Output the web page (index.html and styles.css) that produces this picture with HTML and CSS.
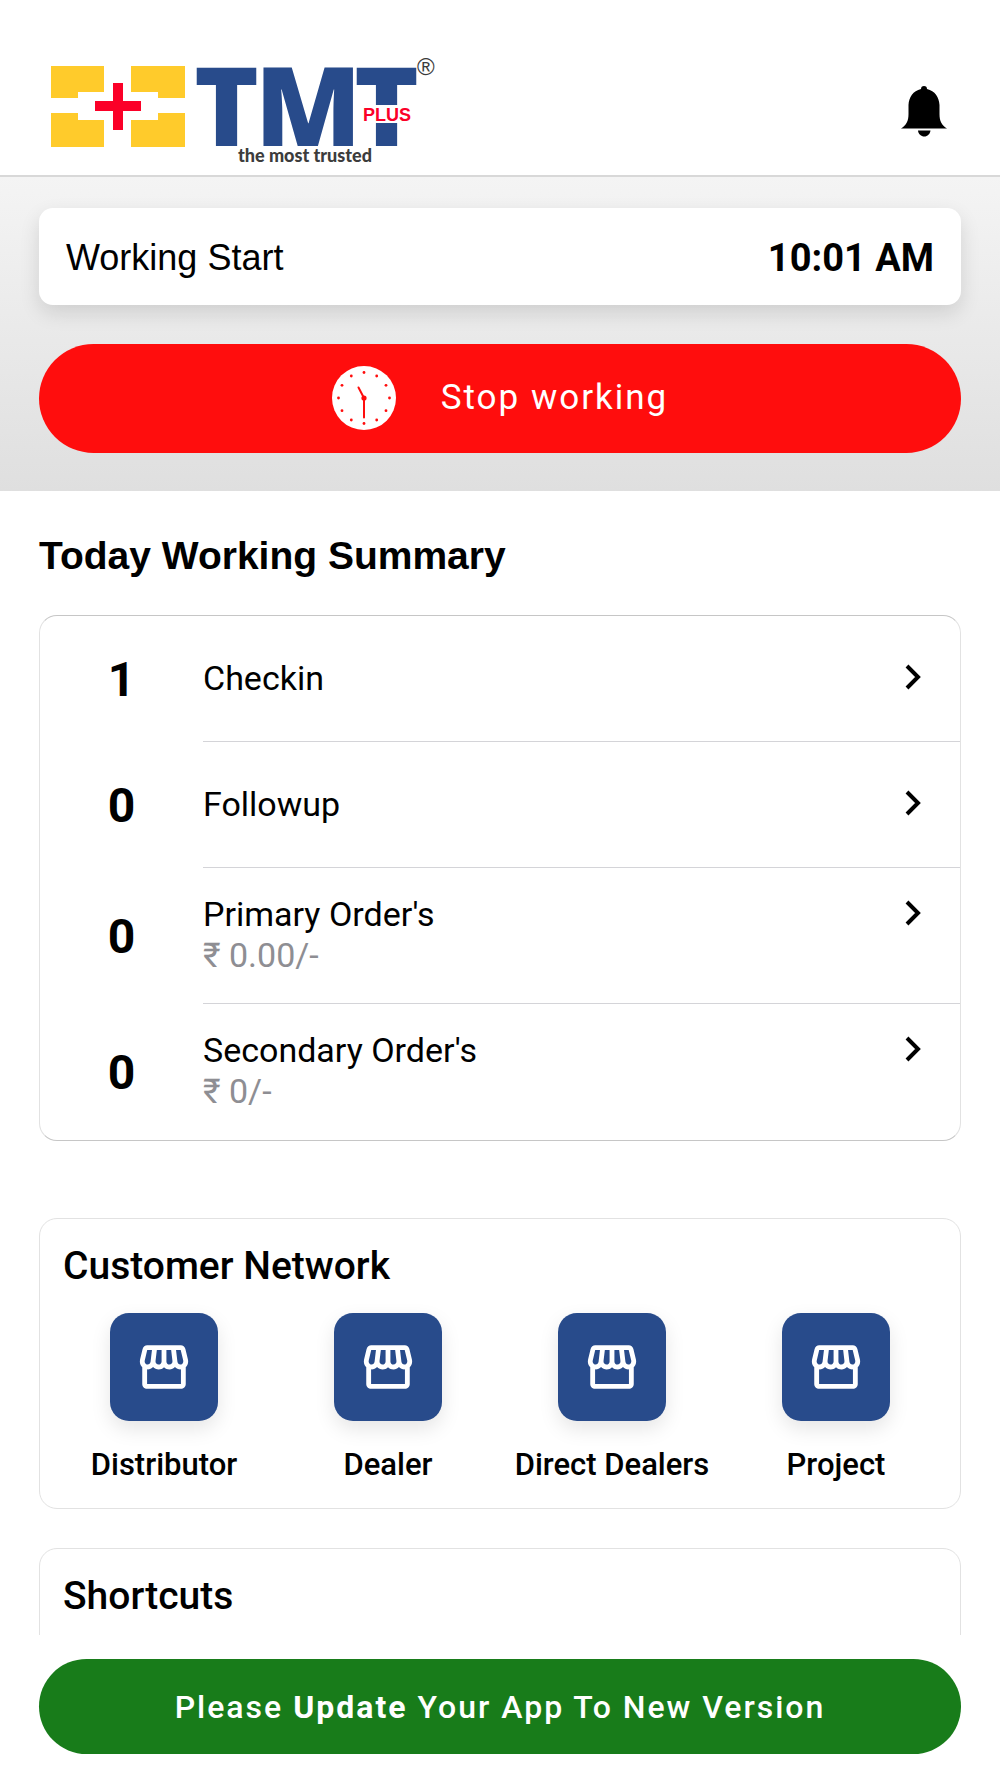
FILE: index.html
```html
<!DOCTYPE html>
<html lang="en">
<head>
    <meta charset="UTF-8">
    <meta name="viewport" content="width=device-width, initial-scale=1">
    <title>TMT Plus</title>
    <link rel="stylesheet" href="styles.css">
</head>
<body>
    <svg class="sprite" width="0" height="0" aria-hidden="true">
        <symbol id="store" viewBox="0 0 24 24">
            <path d="M21.9 8.89l-1.05-4.37c-.22-.9-1-1.52-1.91-1.52H5.05c-.9 0-1.69.63-1.9 1.52L2.1 8.89c-.24 1.02-.02 2.06.62 2.88.08.11.19.19.28.29V19c0 1.1.9 2 2 2h14c1.1 0 2-.9 2-2v-6.94c.09-.09.2-.18.28-.28.64-.82.87-1.87.62-2.89zm-2.99-3.9l1.05 4.37c.1.42.01.84-.25 1.17-.14.18-.44.47-.94.47-.61 0-1.14-.49-1.21-1.14L16.98 5l1.93-.01zM13 5h1.96l.54 4.52c.05.39-.07.78-.33 1.07-.22.26-.54.41-.95.41-.67 0-1.22-.59-1.22-1.31V5zM8.49 9.52L9.04 5H11v4.69c0 .72-.55 1.31-1.29 1.31-.34 0-.65-.15-.89-.41-.25-.29-.37-.68-.33-1.07zm-4.45-.16L5.05 5h1.97l-.58 4.86c-.08.65-.6 1.14-1.21 1.14-.49 0-.8-.29-.93-.47-.27-.32-.36-.75-.26-1.17zM5 19v-6.03c.08.01.15.03.23.03.87 0 1.66-.36 2.24-.95.6.6 1.4.95 2.31.95.87 0 1.65-.36 2.23-.93.59.57 1.39.93 2.29.93.84 0 1.64-.35 2.24-.95.58.59 1.37.95 2.24.95.08 0 .15-.02.23-.03V19H5z"/>
        </symbol>
        <symbol id="chevron" viewBox="0 0 16 26">
            <path d="M2 2l11 11L2 24" fill="none" stroke="currentColor" stroke-width="4"/>
        </symbol>
    </svg>

    <div class="app">
        <header class="header">
            <svg class="logo" viewBox="0 0 386 110" role="img" aria-label="TMT Plus, the most trusted">
                <g fill="#ffcb2b">
                    <path d="M1 10h53v26H28v6H1z"/>
                    <path d="M81 10h54v32h-27v-6H81z"/>
                    <path d="M1 57h27v7h26v27H1z"/>
                    <path d="M108 57h27v34H81V64h27z"/>
                </g>
                <path d="M63 27h10v18h18v10H73v19H63V55H45V45h18z" fill="#fb0028"/>
                <text class="logo-tmt" x="144 205 304" y="90">TMT</text>
                <path d="M306 49h60v18h-60z" fill="#fff"/>
                <text class="logo-plus" x="313" y="65">PLUS</text>
                <text class="logo-tag" x="188" y="106">the most trusted</text>
                <text class="logo-reg" x="367" y="19">®</text>
            </svg>
            <button type="button" class="bell" aria-label="Notifications">
                <svg viewBox="0 0 52 52">
                    <path d="M26 1c2 0 3 1 3 3 8 2 12 8 12.500 16v9c0 7 2 11 7.500 14.500H3C8.500 40 10.500 36 10.500 29v-9C11 12 15 6 23 4c0-2 1-3 3-3z"/>
                    <path d="M20 45.500h12.500c-.5 3.500-3 6-6.200 6s-6-2.500-6.300-6z"/>
                </svg>
            </button>
        </header>

        <main class="content">
            <section class="status">
                <div class="start-card">
                    <span class="start-label">Working Start</span>
                    <span class="start-time">10:01 AM</span>
                </div>
                <button type="button" class="stop-btn">
                    <svg class="clock" viewBox="0 0 64 64">
                        <circle cx="32" cy="32" r="32" fill="#fff"/>
                        <g fill="#ff0d0d">
                            <circle cx="32" cy="6.500" r="1.400"/>
                            <circle cx="44.700" cy="10" r="1.400"/>
                            <circle cx="54" cy="19.300" r="1.400"/>
                            <circle cx="57.500" cy="32" r="1.400"/>
                            <circle cx="54" cy="44.700" r="1.400"/>
                            <circle cx="44.700" cy="54" r="1.400"/>
                            <circle cx="32" cy="57.500" r="1.400"/>
                            <circle cx="19.300" cy="54" r="1.400"/>
                            <circle cx="10" cy="44.700" r="1.400"/>
                            <circle cx="6.500" cy="32" r="1.400"/>
                            <circle cx="10" cy="19.300" r="1.400"/>
                            <circle cx="19.300" cy="10" r="1.400"/>
                            <circle cx="32" cy="32" r="2.600"/>
                        </g>
                        <path d="M26.500 21.500L32 32v19.500" fill="none" stroke="#ff0d0d" stroke-width="2" stroke-linecap="round"/>
                    </svg>
                    <span>Stop working</span>
                </button>
            </section>

            <h1 class="page-title">Today Working Summary</h1>

            <div class="summary">
                <a href="#checkin" class="summary-row">
                    <span class="count">1</span>
                    <span class="row-body">
                        <span class="row-text">Checkin</span>
                        <svg class="chevron"><use href="#chevron"/></svg>
                    </span>
                </a>
                <a href="#followup" class="summary-row">
                    <span class="count">0</span>
                    <span class="row-body">
                        <span class="row-text">Followup</span>
                        <svg class="chevron"><use href="#chevron"/></svg>
                    </span>
                </a>
                <a href="#primary" class="summary-row">
                    <span class="count">0</span>
                    <span class="row-body two-line">
                        <span class="row-text">Primary Order's<small>₹ 0.00/-</small></span>
                        <svg class="chevron"><use href="#chevron"/></svg>
                    </span>
                </a>
                <a href="#secondary" class="summary-row">
                    <span class="count">0</span>
                    <span class="row-body two-line">
                        <span class="row-text">Secondary Order's<small>₹ 0/-</small></span>
                        <svg class="chevron"><use href="#chevron"/></svg>
                    </span>
                </a>
            </div>

            <section class="panel">
                <h2 class="panel-title">Customer Network</h2>
                <div class="tiles">
                    <a href="#distributor" class="tile">
                        <span class="tile-icon"><svg><use href="#store"/></svg></span>
                        <span>Distributor</span>
                    </a>
                    <a href="#dealer" class="tile">
                        <span class="tile-icon"><svg><use href="#store"/></svg></span>
                        <span>Dealer</span>
                    </a>
                    <a href="#direct-dealers" class="tile">
                        <span class="tile-icon"><svg><use href="#store"/></svg></span>
                        <span>Direct Dealers</span>
                    </a>
                    <a href="#project" class="tile">
                        <span class="tile-icon"><svg><use href="#store"/></svg></span>
                        <span>Project</span>
                    </a>
                </div>
            </section>

            <section class="panel shortcuts">
                <h2 class="panel-title">Shortcuts</h2>
            </section>
        </main>

        <footer class="footer">
            <button type="button" class="update-btn">Please <b>Update</b> Your App To New Version</button>
        </footer>
    </div>
</body>
</html>
```

FILE: styles.css
```css
* {
    box-sizing: border-box;
}

body {
    margin: 0;
    font-family: Roboto, sans-serif;
    color: #000;
    background-color: #fff;
}

button {
    border: none;
    padding: 0;
    font-family: inherit;
    cursor: pointer;
}

a {
    color: inherit;
    text-decoration: none;
}

.sprite {
    display: none;
}

.app {
    display: flex;
    flex-direction: column;
    height: 100vh;
}

/* Header */
.header {
    display: flex;
    align-items: center;
    justify-content: space-between;
    padding: 56px 50px 9px;
    border-bottom: 2px solid #d8d8d8;
}

.logo {
    width: 386px;
    height: 110px;
    overflow: visible;
}

.logo-tmt {
    font: 800 110px "Open Sans", sans-serif;
    fill: #284b8b;
}

.logo-plus {
    font: bold 18px "Liberation Sans", sans-serif;
    fill: #fb0028;
}

.logo-tag {
    font: 900 18px Lato, sans-serif;
    fill: #3c3c3c;
}

.logo-reg {
    font: 24px "Liberation Sans", sans-serif;
    fill: #3c3c3c;
}

.bell {
    background: none;
}

.bell svg {
    display: block;
    width: 52px;
    height: 52px;
}

/* Scrolling content */
.content {
    flex: 1;
    min-height: 0;
    overflow-y: auto;
    scrollbar-width: none;
}

.status {
    padding: 31px 39px 38px;
    background: linear-gradient(#f4f4f4, #dfdfdf);
}

.start-card {
    display: flex;
    align-items: center;
    justify-content: space-between;
    height: 97px;
    margin-bottom: 39px;
    padding: 2px 27px 0;
    border-radius: 14px;
    background-color: #fff;
    box-shadow: 0 8px 20px rgba(0, 0, 0, 0.12);
}

.start-label {
    font-family: "Liberation Sans", sans-serif;
    font-size: 36px;
}

.start-time {
    font-size: 38px;
    font-weight: bold;
}

.stop-btn {
    display: flex;
    align-items: center;
    justify-content: center;
    gap: 45px;
    width: 100%;
    height: 109px;
    padding-bottom: 2px;
    border-radius: 55px;
    font-size: 35px;
    letter-spacing: 2px;
    color: #fff;
    background-color: #ff0d0d;
}

.clock {
    width: 64px;
    height: 64px;
}

.page-title {
    margin: 40px 39px 35px;
    font-family: "Liberation Sans", sans-serif;
    font-size: 39px;
    line-height: 49px;
}

.summary {
    margin: 0 39px 77px;
    border: 1px solid #e2e2e2;
    border-top-color: #c6c6c6;
    border-bottom-color: #c6c6c6;
    border-radius: 18px;
}

.summary-row {
    display: flex;
    align-items: center;
}

.count {
    width: 163px;
    text-align: center;
    font-size: 48px;
    font-weight: bold;
}

.row-body {
    display: flex;
    flex: 1;
    align-items: center;
    justify-content: space-between;
    min-height: 126px;
    padding-right: 39px;
    border-bottom: 1px solid #d4d4d8;
}

.row-body.two-line {
    align-items: flex-start;
    min-height: 136px;
    padding-top: 26px;
}

.summary-row:last-child .row-body {
    border-bottom: none;
}

.row-text {
    font-size: 34px;
    line-height: 41px;
}

.row-text small {
    display: block;
    font-size: 34px;
    color: #8e8e93;
}

.chevron {
    width: 16px;
    height: 26px;
    margin-bottom: 4px;
}

.two-line .chevron {
    margin-top: 6px;
}

/* Cards with tiles */
.panel {
    margin: 0 39px 39px;
    padding: 23px 12px;
    border: 1px solid #e2e2e2;
    border-radius: 18px;
}

.panel-title {
    margin: 0 11px 22px;
    font-size: 39px;
    font-weight: 500;
    line-height: 49px;
}

.tiles {
    display: grid;
    grid-template-columns: repeat(4, 1fr);
}

.tile {
    display: flex;
    flex-direction: column;
    align-items: center;
    gap: 24px;
    font-size: 31px;
    font-weight: 500;
    line-height: 40px;
    white-space: nowrap;
}

.tile-icon {
    display: flex;
    align-items: center;
    justify-content: center;
    width: 108px;
    height: 108px;
    border-radius: 19px;
    background-color: #284b8b;
    box-shadow: 0 8px 20px rgba(0, 0, 0, 0.1);
}

.tile-icon svg {
    width: 58px;
    height: 58px;
    fill: #fff;
}

.shortcuts {
    min-height: 292px;
}

.footer {
    padding: 24px 39px;
    background-color: #fff;
}

.update-btn {
    display: block;
    width: 100%;
    height: 95px;
    border-radius: 48px;
    font-size: 32px;
    font-weight: 500;
    letter-spacing: 2px;
    color: #fff;
    background-color: #187c1a;
}
```
